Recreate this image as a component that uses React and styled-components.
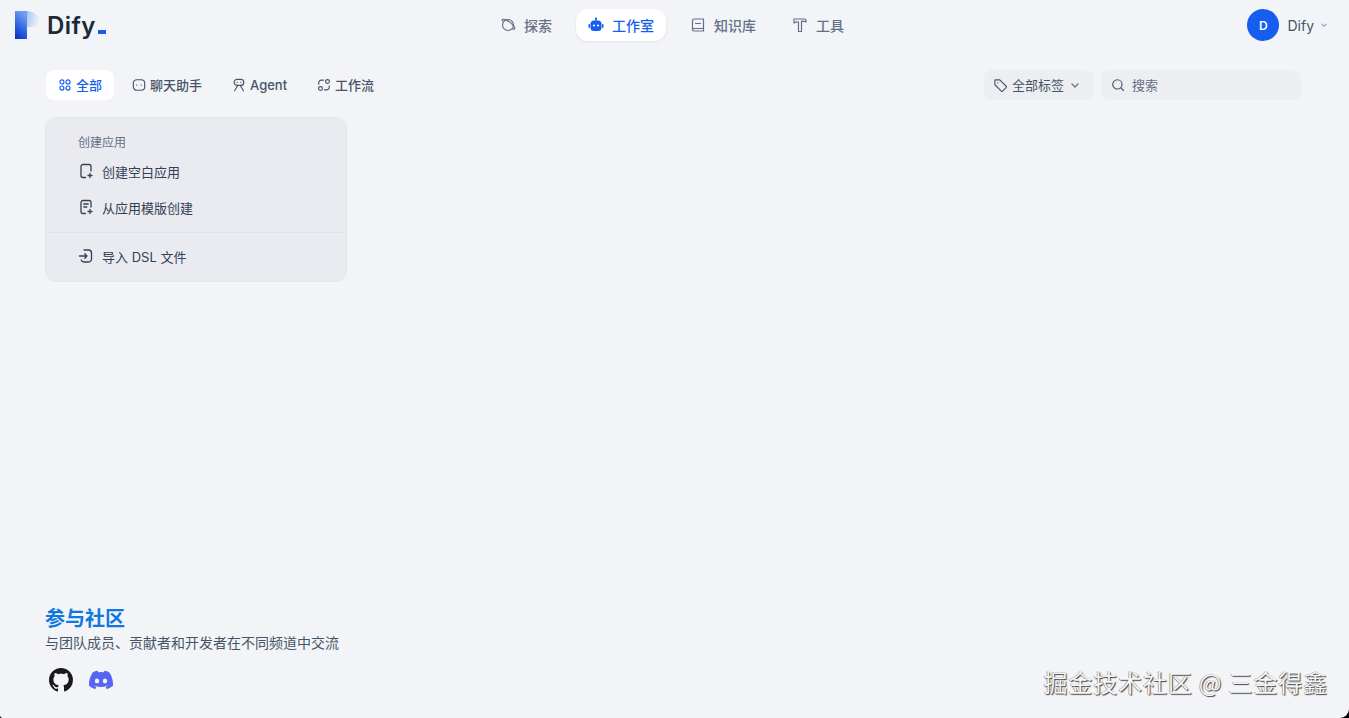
import React from 'react'
import styled, { createGlobalStyle } from 'styled-components'

const GlobalStyle = createGlobalStyle`
  html, body { margin: 0; padding: 0; background: #000; }
  * { box-sizing: border-box; }
`

const Page = styled.div`
  position: relative;
  height: 718px;
  overflow: hidden;
  display: flex;
  flex-direction: column;
  background: #f2f4f8;
  border-radius: 0 0 9px 3px;
  font-family: Inter, "Noto Sans CJK SC", "Noto Sans", sans-serif;
  color: #344054;
`
const Header = styled.header`
  display: flex;
  align-items: center;
  height: 50px;
  padding: 0 20px 0 15px;
  flex: none;
`
const Brand = styled.div`
  flex: 1;
  display: flex;
  align-items: center;
`
const BrandName = styled.span`
  font-size: 24px;
  font-weight: 600;
  letter-spacing: 0.4px;
  color: #1d2939;
  line-height: 30px;
  position: relative;
  top: 1px;
`
const BrandDot = styled.i`
  display: inline-block;
  width: 8px;
  height: 4px;
  margin-left: 2px;
  background: #155eef;
`
const Nav = styled.nav`
  display: flex;
  align-items: center;
  gap: 12px;
`
const NavItem = styled.a`
  display: flex;
  align-items: center;
  gap: 8px;
  height: 32px;
  padding: 0 12px;
  border-radius: 12px;
  font-size: 14px;
  font-weight: 500;
  color: ${p => (p.$active ? '#155eef' : '#667085')};
  background: ${p => (p.$active ? '#fff' : 'transparent')};
  box-shadow: ${p => (p.$active ? '0 1px 3px rgba(16,24,40,.08)' : 'none')};
`
const Account = styled.div`
  flex: 1;
  display: flex;
  justify-content: flex-end;
  align-items: center;
  font-size: 14px;
  color: #475467;
`
const Avatar = styled.div`
  width: 32px;
  height: 32px;
  margin-right: 8px;
  border-radius: 50%;
  display: flex;
  align-items: center;
  justify-content: center;
  background: #155eef;
  color: #fff;
  font-size: 12px;
  font-weight: 600;
`
const AccountName = styled.span`
  margin-right: 5px;
`
const Main = styled.main`
  flex: 1;
  display: flex;
  flex-direction: column;
  padding: 20px 48px 0 45px;
`
const Toolbar = styled.div`
  display: flex;
  justify-content: space-between;
  align-items: center;
  height: 30px;
`
const Tabs = styled.div`
  display: flex;
  align-items: center;
  gap: 6px;
  margin-left: 1px;
`
const Tab = styled.a`
  display: flex;
  align-items: center;
  gap: 4px;
  height: 30px;
  padding: 0 12px;
  border-radius: 8px;
  font-size: 13px;
  font-weight: 500;
  color: ${p => (p.$active ? '#155eef' : '#475467')};
  background: ${p => (p.$active ? '#fff' : 'transparent')};
`
const Label = styled.span`
  margin-bottom: ${p => (p.$latin ? 0 : 2)}px;
`
const Filters = styled.div`
  display: flex;
  align-items: center;
  gap: 7px;
`
const FilterBox = styled.div`
  display: flex;
  align-items: center;
  height: 30px;
  width: ${p => p.$width}px;
  padding: 0 ${p => p.$pad}px;
  gap: 4px;
  border-radius: 8px;
  background: #eceef2;
  font-size: 13px;
  color: #475467;
`
const Placeholder = styled(Label)`
  color: #667085;
  margin-left: 3px;
`
const CreateCard = styled.div`
  width: 302px;
  height: 165px;
  margin-top: 17px;
  padding-top: 16px;
  border: 1px solid #e1e4ea;
  border-radius: 12px;
  background: #e9ebf0;
`
const CardTitle = styled.div`
  height: 17px;
  line-height: 17px;
  padding-left: 32px;
  font-size: 12px;
  color: #667085;
`
const CardItem = styled.a`
  display: flex;
  align-items: center;
  gap: 8px;
  height: 36px;
  padding-left: 32px;
  font-size: 13px;
  color: #344054;
`
const CardList = styled.div`
  margin-top: ${p => p.$top || 0}px;
`
const CardDivider = styled.div`
  height: 1px;
  margin: 7px 1px 5px;
  background: #dfe2e8;
`
const Community = styled.footer`
  margin-top: auto;
  padding-bottom: 26px;
`
const CommunityTitle = styled.h3`
  margin: 0;
  font-size: 20px;
  line-height: 26px;
  font-weight: 700;
  color: #0f78dc;
`
const CommunityText = styled.p`
  margin: 1px 0 0;
  font-size: 14px;
  line-height: 20px;
  color: #475467;
`
const SocialRow = styled.div`
  display: flex;
  align-items: center;
  gap: 16px;
  margin: 15px 0 0 4px;
`
const Watermark = styled.div`
  position: absolute;
  right: 21px;
  bottom: 20px;
  font-size: 24px;
  line-height: 32px;
  letter-spacing: 0.85px;
  color: #f4f5f7;
  text-shadow: 1px 1px 1px #444, -0.5px -0.5px 0 #777;
  font-family: "Noto Sans CJK SC", sans-serif;
`
const Svg = styled.svg`
  flex: none;
  display: block;
  fill: none;
  stroke: currentColor;
  stroke-width: ${p => p.$stroke || 1.3};
  stroke-linecap: round;
  stroke-linejoin: round;
`
const ChevronSvg = styled(Svg)`
  color: #667085;
`

const Icon = ({ size = 16, stroke, children }) => (
  <Svg width={size} height={size} viewBox="0 0 16 16" $stroke={stroke}>{children}</Svg>
)

const Logo = () => (
  <svg width="32" height="30" viewBox="0 0 32 30">
    <defs>
      <linearGradient id="logoStem" x1="0" y1="1" x2="0.4" y2="0">
        <stop offset="0" stopColor="#0c2cc0" />
        <stop offset="0.5" stopColor="#2f62e0" />
        <stop offset="1" stopColor="#6f9cf2" />
      </linearGradient>
      <linearGradient id="logoBowl" x1="0" y1="0" x2="1" y2="0.3">
        <stop offset="0" stopColor="#5f93ee" />
        <stop offset="0.65" stopColor="#c3d6f8" />
        <stop offset="1" stopColor="#f2f4f8" />
      </linearGradient>
    </defs>
    <path d="M0 1h11c8 0 14 5 14 11 0 3-1 5-2 5H12V29H0z" fill="url(#logoBowl)" />
    <path d="M0 1h12V29H0z" fill="url(#logoStem)" />
  </svg>
)

const ExploreIcon = () => (
  <Icon stroke={1.2}>
    <circle cx="8" cy="8" r="5.500" />
    <path d="M3 4.200c-1.800-1.600-.6-2.500 2-1.600 3 1 6.500 3.500 8.500 6 2 2.600 1.500 4-1 3.300" />
  </Icon>
)
const RobotIcon = () => (
  <svg width="16" height="16" viewBox="0 0 16 16">
    <rect x="7.300" y="1" width="1.400" height="3" fill="#155eef" />
    <circle cx="8" cy="1.600" r="1.100" fill="#155eef" />
    <rect x="2.500" y="3.500" width="11" height="10.500" rx="3.500" fill="#155eef" />
    <rect x="0.500" y="7" width="1.500" height="4" rx="0.700" fill="#155eef" />
    <rect x="14" y="7" width="1.500" height="4" rx="0.700" fill="#155eef" />
    <circle cx="6" cy="8.500" r="1.100" fill="#fff" />
    <circle cx="10" cy="8.500" r="1.100" fill="#fff" />
  </svg>
)
const BookIcon = () => (
  <Icon stroke={1.2}>
    <path d="M13.500 11.500V2H4.200C3.300 2 2.500 2.700 2.500 3.600v9.200C2.500 13.700 3.300 14 4.200 14h9.300v-2.500H4.200c-.9 0-1.700.4-1.700 1.200" />
    <path d="M5.500 6.500h5" />
  </Icon>
)
const HammerIcon = () => (
  <Icon stroke={1.2}>
    <path d="M2 2h10.500c1 0 1.500.6 1.500 1.500V5c-1-.6-2.500-.9-4.500-.9V14.500h-3V5C5 4.500 3.500 5 2 6z" />
  </Icon>
)
const SmallChevron = ({ size = 10 }) => (
  <ChevronSvg width={size} height={size} viewBox="0 0 10 10" $stroke={1}>
    <path d="M2.800 4.200L5 6.400l2.200-2.200" />
  </ChevronSvg>
)
const GridIcon = () => (
  <Icon size={14} stroke={1.3}>
    <circle cx="4.500" cy="4.500" r="2.300" />
    <circle cx="11.500" cy="4.500" r="2.300" />
    <circle cx="4.500" cy="11.500" r="2.300" />
    <circle cx="11.500" cy="11.500" r="2.300" />
  </Icon>
)
const ChatIcon = () => (
  <Icon size={14} stroke={1.3}>
    <rect x="1.500" y="2" width="13" height="12" rx="4" />
    <path d="M5.500 8.200h.01M10.500 8.200h.01" />
  </Icon>
)
const AgentIcon = () => (
  <Icon size={14} stroke={1.3}>
    <rect x="2.500" y="1.500" width="11" height="7" rx="3.500" />
    <path d="M6 5h.01M10 5h.01M6.500 8.500L3 14.500M9.500 8.500l3.500 6" />
  </Icon>
)
const FlowIcon = () => (
  <Icon size={14} stroke={1.3}>
    <circle cx="12" cy="4" r="2.200" />
    <circle cx="4" cy="12" r="2.200" />
    <path d="M7.500 2.500H5a3 3 0 0 0-3 3V7M8.500 13.500H11a3 3 0 0 0 3-3V9" />
  </Icon>
)
const TagIcon = () => (
  <Icon size={15} stroke={1.2}>
    <path d="M2 2.800c0-.5.400-.8.800-.8h4.400L14 8.800c.4.400.4 1 0 1.400L10.200 14c-.4.400-1 .4-1.400 0L2 7.200z" />
    <path d="M5.200 5.200h.01" />
  </Icon>
)
const SearchIcon = () => (
  <Icon size={14} stroke={1.3}>
    <circle cx="7.300" cy="7.300" r="5.300" />
    <path d="M11.300 11.300l3 3" />
  </Icon>
)
const NewFileIcon = () => (
  <Icon stroke={1.3}>
    <path d="M7.500 14.500H5a2 2 0 0 1-2-2v-9a2 2 0 0 1 2-2h6a2 2 0 0 1 2 2v4.500" />
    <path d="M12 10.500v4M10 12.500h4" />
  </Icon>
)
const TemplateIcon = () => (
  <Icon stroke={1.3}>
    <path d="M7.500 14.500H5a2 2 0 0 1-2-2v-9a2 2 0 0 1 2-2h6a2 2 0 0 1 2 2v4.500" />
    <path d="M5.800 5h4.400M5.800 8h3M12 10.500v4M10 12.500h4" />
  </Icon>
)
const ImportIcon = () => (
  <Icon stroke={1.3}>
    <path d="M6 2h4.500A3 3 0 0 1 13.500 5v6a3 3 0 0 1-3 3H6c-1.300 0-2.400-.8-2.800-2" />
    <path d="M1.500 8h7.500M6.800 5.800L9 8l-2.200 2.200" />
  </Icon>
)
const GithubIcon = () => (
  <svg width="24" height="24" viewBox="0 0 16 16">
    <path fill="#1a1a1a" d="M8 0C3.580 0 0 3.580 0 8c0 3.540 2.290 6.530 5.470 7.590.4.070.55-.17.55-.38 0-.19-.01-.82-.01-1.490-2.010.37-2.530-.49-2.690-.94-.09-.23-.48-.94-.82-1.130-.28-.15-.68-.52-.01-.53.63-.01 1.080.58 1.230.82.720 1.210 1.870.87 2.330.66.070-.52.280-.87.510-1.070-1.780-.2-3.640-.89-3.640-3.950 0-.87.310-1.590.820-2.150-.08-.2-.36-1.020.08-2.120 0 0 .67-.21 2.200.82.640-.18 1.320-.27 2-.27s1.360.09 2 .27c1.530-1.040 2.200-.82 2.200-.82.440 1.100.16 1.920.08 2.120.51.560.82 1.270.82 2.150 0 3.070-1.870 3.750-3.650 3.950.29.25.54.73.54 1.480 0 1.070-.01 1.930-.01 2.200 0 .21.150.46.550.38A8.010 8.010 0 0 0 16 8c0-4.420-3.580-8-8-8z" />
  </svg>
)
const DiscordIcon = () => (
  <svg width="24" height="24" viewBox="0 0 16 16">
    <path fill="#5865f2" d="M13.545 2.907a13.200 13.200 0 0 0-3.257-1.011.050.050 0 0 0-.052.025c-.141.250-.297.577-.406.833a12.190 12.190 0 0 0-3.658 0 8.258 8.258 0 0 0-.412-.833.051.051 0 0 0-.052-.025c-1.125.194-2.220.534-3.257 1.011a.041.041 0 0 0-.021.018C.356 6.024-.213 9.047.066 12.032c.001.014.010.028.021.037a13.276 13.276 0 0 0 3.995 2.020.050.050 0 0 0 .056-.019c.308-.420.582-.863.818-1.329a.050.050 0 0 0-.027-.070 8.735 8.735 0 0 1-1.248-.595.050.050 0 0 1-.005-.084c.084-.063.168-.129.248-.195a.050.050 0 0 1 .051-.007c2.619 1.196 5.454 1.196 8.041 0a.052.052 0 0 1 .053.007c.080.066.164.132.248.195a.051.051 0 0 1-.004.085c-.399.233-.813.430-1.249.594a.050.050 0 0 0-.027.071c.240.465.515.909.817 1.329a.050.050 0 0 0 .056.019 13.235 13.235 0 0 0 4.001-2.020.049.049 0 0 0 .021-.037c.334-3.451-.559-6.449-2.366-9.106a.034.034 0 0 0-.020-.019zM5.347 10.200c-.789 0-1.438-.724-1.438-1.612 0-.889.637-1.613 1.438-1.613.807 0 1.450.730 1.438 1.613 0 .888-.637 1.612-1.438 1.612zm5.316 0c-.788 0-1.438-.724-1.438-1.612 0-.889.637-1.613 1.438-1.613.807 0 1.451.730 1.438 1.613 0 .888-.631 1.612-1.438 1.612z" />
  </svg>
)

export default function App () {
  return (
    <>
      <GlobalStyle />
      <Page>
        <Header>
          <Brand>
            <Logo />
            <BrandName>Dify<BrandDot /></BrandName>
          </Brand>
          <Nav>
            <NavItem><ExploreIcon />探索</NavItem>
            <NavItem $active><RobotIcon />工作室</NavItem>
            <NavItem><BookIcon />知识库</NavItem>
            <NavItem><HammerIcon />工具</NavItem>
          </Nav>
          <Account>
            <Avatar>D</Avatar>
            <AccountName>Dify</AccountName>
            <SmallChevron />
          </Account>
        </Header>
        <Main>
          <Toolbar>
            <Tabs>
              <Tab $active><GridIcon /><Label>全部</Label></Tab>
              <Tab><ChatIcon /><Label>聊天助手</Label></Tab>
              <Tab><AgentIcon /><Label $latin>Agent</Label></Tab>
              <Tab><FlowIcon /><Label>工作流</Label></Tab>
            </Tabs>
            <Filters>
              <FilterBox $width={110} $pad={9}><TagIcon /><Label>全部标签</Label><SmallChevron size={14} /></FilterBox>
              <FilterBox $width={200} $pad={10}><SearchIcon /><Placeholder>搜索</Placeholder></FilterBox>
            </Filters>
          </Toolbar>
          <CreateCard>
            <CardTitle>创建应用</CardTitle>
            <CardList $top={2}>
              <CardItem><NewFileIcon />创建空白应用</CardItem>
              <CardItem><TemplateIcon />从应用模版创建</CardItem>
            </CardList>
            <CardDivider />
            <CardItem><ImportIcon />导入 DSL 文件</CardItem>
          </CreateCard>
          <Community>
            <CommunityTitle>参与社区</CommunityTitle>
            <CommunityText>与团队成员、贡献者和开发者在不同频道中交流</CommunityText>
            <SocialRow>
              <GithubIcon />
              <DiscordIcon />
            </SocialRow>
          </Community>
        </Main>
        <Watermark>掘金技术社区 @ 三金得鑫</Watermark>
      </Page>
    </>
  )
}
